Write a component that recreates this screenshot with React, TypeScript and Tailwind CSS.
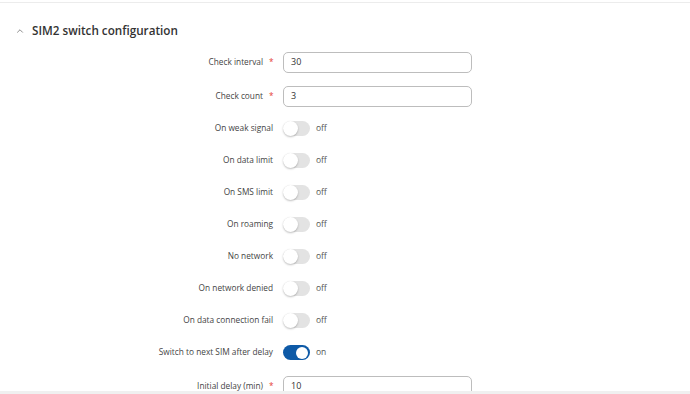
import { ChevronUp } from "lucide-react";

type Row =
  | { kind: "input"; label: string; value: string }
  | { kind: "toggle"; label: string; on: boolean };

const rows: Row[] = [
  { kind: "input", label: "Check interval", value: "30" },
  { kind: "input", label: "Check count", value: "3" },
  { kind: "toggle", label: "On weak signal", on: false },
  { kind: "toggle", label: "On data limit", on: false },
  { kind: "toggle", label: "On SMS limit", on: false },
  { kind: "toggle", label: "On roaming", on: false },
  { kind: "toggle", label: "No network", on: false },
  { kind: "toggle", label: "On network denied", on: false },
  { kind: "toggle", label: "On data connection fail", on: false },
  { kind: "toggle", label: "Switch to next SIM after delay", on: true },
  { kind: "input", label: "Initial delay (min)", value: "10" },
];

function Toggle({ on }: { on: boolean }) {
  return (
    <div className="flex items-center gap-[6px]">
      <div
        className={
          on
            ? "relative h-[15px] w-[27px] rounded-full bg-[#0e5aa7]"
            : "relative h-[15px] w-[27px] rounded-full bg-[#e3e3e3]"
        }
      >
        <div
          className={
            on
              ? "absolute right-[2px] top-[1.5px] h-[12px] w-[12px] rounded-full bg-white"
              : "absolute left-0 top-0 h-[15px] w-[15px] rounded-full bg-white shadow-[0_1px_2px_rgba(0,0,0,0.25)]"
          }
        />
      </div>
      <span className="text-[8.5px] text-[#555]">{on ? "on" : "off"}</span>
    </div>
  );
}

export default function App() {
  return (
    <div className="h-[394px] w-[690px] overflow-hidden bg-white font-['Open_Sans',sans-serif]">
      <div className="mt-[2px] border-t border-[#ececec]" />
      <div className="flex items-center gap-[7px] pl-[15px] pt-[19px]">
        <ChevronUp size={10} strokeWidth={1.6} className="text-[#555]" />
        <h2 className="text-[11.7px] font-semibold text-[#333]">SIM2 switch configuration</h2>
      </div>
      <div className="mt-[5px] flex flex-col">
        {rows.map((r, i) => (
          <div
            key={r.label}
            className={
              r.kind === "toggle"
                ? "flex h-[32px] items-center"
                : i === 1
                  ? "flex h-[33px] items-center"
                  : "flex h-[35px] items-center"
            }
          >
            <div className="flex w-[273px] justify-end text-[8.3px] text-[#444]">
              <span>{r.label}</span>
              {r.kind === "input" && <span className="ml-[6px] w-[4px] text-[#e53935]">*</span>}
            </div>
            <div className="ml-[10px]">
              {r.kind === "input" ? (
                <div className="flex h-[21px] w-[189px] items-center rounded-[5px] border border-[#bdbdbd] px-[7px] text-[9px] text-[#333]">
                  {r.value}
                </div>
              ) : (
                <Toggle on={r.on} />
              )}
            </div>
          </div>
        ))}
      </div>
      <div className="fixed bottom-0 left-0 h-[3px] w-[690px] bg-[#f0f0f0]" />
    </div>
  );
}
